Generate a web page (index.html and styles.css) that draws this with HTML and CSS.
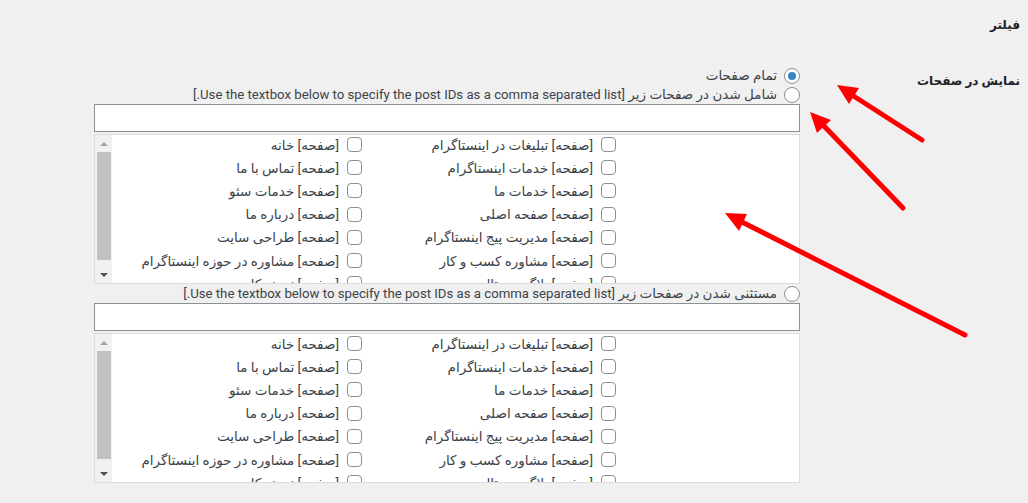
FILE: index.html
```html
<!DOCTYPE html>
<html lang="fa" dir="rtl">
<head>
<meta charset="utf-8">
<title>فیلتر</title>
<link rel="stylesheet" href="styles.css">
</head>
<body>
<div class="page">
  <h2 class="title">فیلتر</h2>
  <div class="row">
    <div class="label">نمایش در صفحات</div>
    <div class="field">
      <label class="opt"><span class="radio checked"></span><span>تمام صفحات</span></label>
      <label class="opt"><span class="radio"></span><span>شامل شدن در صفحات زیر <span class="en">[Use the textbox below to specify the post IDs as a comma separated list.]</span></span></label>
      <div class="textbox"></div>
      <div class="listbox">
        <div class="items">
          <label class="item"><span class="cb"></span><span>[صفحه] تبلیغات در اینستاگرام</span></label>
          <label class="item"><span class="cb"></span><span>[صفحه] خانه</span></label>
          <label class="item"><span class="cb"></span><span>[صفحه] خدمات اینستاگرام</span></label>
          <label class="item"><span class="cb"></span><span>[صفحه] تماس با ما</span></label>
          <label class="item"><span class="cb"></span><span>[صفحه] خدمات ما</span></label>
          <label class="item"><span class="cb"></span><span>[صفحه] خدمات سئو</span></label>
          <label class="item"><span class="cb"></span><span>[صفحه] صفحه اصلی</span></label>
          <label class="item"><span class="cb"></span><span>[صفحه] درباره ما</span></label>
          <label class="item"><span class="cb"></span><span>[صفحه] مدیریت پیج اینستاگرام</span></label>
          <label class="item"><span class="cb"></span><span>[صفحه] طراحی سایت</span></label>
          <label class="item"><span class="cb"></span><span>[صفحه] مشاوره کسب و کار</span></label>
          <label class="item"><span class="cb"></span><span>[صفحه] مشاوره در حوزه اینستاگرام</span></label>
          <label class="item"><span class="cb"></span><span>[صفحه] بلاگ دیجیتال</span></label>
          <label class="item"><span class="cb"></span><span>[صفحه] نمونه کار</span></label>
        </div>
        <div class="sbar"><span class="sb-up"></span><span class="sb-thumb"></span><span class="sb-down"></span></div>
      </div>
      <label class="opt"><span class="radio"></span><span>مستثنی شدن در صفحات زیر <span class="en">[Use the textbox below to specify the post IDs as a comma separated list.]</span></span></label>
      <div class="textbox"></div>
      <div class="listbox">
        <div class="items">
          <label class="item"><span class="cb"></span><span>[صفحه] تبلیغات در اینستاگرام</span></label>
          <label class="item"><span class="cb"></span><span>[صفحه] خانه</span></label>
          <label class="item"><span class="cb"></span><span>[صفحه] خدمات اینستاگرام</span></label>
          <label class="item"><span class="cb"></span><span>[صفحه] تماس با ما</span></label>
          <label class="item"><span class="cb"></span><span>[صفحه] خدمات ما</span></label>
          <label class="item"><span class="cb"></span><span>[صفحه] خدمات سئو</span></label>
          <label class="item"><span class="cb"></span><span>[صفحه] صفحه اصلی</span></label>
          <label class="item"><span class="cb"></span><span>[صفحه] درباره ما</span></label>
          <label class="item"><span class="cb"></span><span>[صفحه] مدیریت پیج اینستاگرام</span></label>
          <label class="item"><span class="cb"></span><span>[صفحه] طراحی سایت</span></label>
          <label class="item"><span class="cb"></span><span>[صفحه] مشاوره کسب و کار</span></label>
          <label class="item"><span class="cb"></span><span>[صفحه] مشاوره در حوزه اینستاگرام</span></label>
          <label class="item"><span class="cb"></span><span>[صفحه] بلاگ دیجیتال</span></label>
          <label class="item"><span class="cb"></span><span>[صفحه] نمونه کار</span></label>
        </div>
        <div class="sbar"><span class="sb-up"></span><span class="sb-thumb"></span><span class="sb-down"></span></div>
      </div>
    </div>
  </div>
</div>
<svg class="arrows" width="1028" height="503" viewBox="0 0 1028 503" aria-hidden="true">
  <g stroke="#ff0000" stroke-width="5" stroke-linecap="round" fill="none">
    <line x1="922" y1="140" x2="852" y2="95"/>
    <line x1="903" y1="208" x2="823" y2="125"/>
    <line x1="965" y1="335" x2="742" y2="222"/>
  </g>
  <g fill="#ff0000">
    <polygon points="837,85 859,88 849,104"/>
    <polygon points="810,112 831,120 817,133"/>
    <polygon points="725,213 747,214 739,231"/>
  </g>
</svg>
</body>
</html>
```

FILE: styles.css
```css
* { box-sizing: border-box; }

html, body {
  margin: 0;
  padding: 0;
  background: #f0f0f0;
}

body {
  font-family: Roboto, "DejaVu Sans", sans-serif;
  font-size: 13.5px;
  color: #2c3338;
  width: 1028px;
  height: 503px;
  overflow: hidden;
  position: relative;
}

.page {
  direction: rtl;
  padding-right: 8px;
}

.title {
  margin: 0;
  padding-top: 15px;
  height: 66px;
  font-size: 12px;
  line-height: 20px;
  font-weight: bold;
  color: #1d2327;
}

.row {
  display: flex;
}

.label {
  width: 220px;
  padding-top: 5px;
  font-weight: bold;
  font-size: 12px;
  line-height: 20px;
  color: #1d2327;
}

.field {
  width: 706px;
  display: flex;
  flex-direction: column;
}

.opt {
  display: flex;
  align-items: center;
  gap: 7px;
  height: 19px;
  line-height: 19px;
  white-space: nowrap;
  color: #3c434a;
}

.en {
  font-size: 13.2px;
}

.radio {
  width: 16px;
  height: 16px;
  border: 1px solid #8c8f94;
  border-radius: 50%;
  background: #fff;
  flex: none;
  display: flex;
  align-items: center;
  justify-content: center;
}

.radio.checked::after {
  content: "";
  width: 8px;
  height: 8px;
  border-radius: 50%;
  background: #3582c4;
}

.textbox {
  height: 28px;
  border: 1px solid #8c8f94;
  background: #fff;
  margin-bottom: 2px;
}

.listbox {
  height: 150px;
  border: 1px solid #dcdcde;
  background: #fff;
  display: flex;
  overflow: hidden;
}

.items {
  flex: 1;
  display: grid;
  grid-template-columns: 254px 254px;
  grid-auto-rows: 23.2px;
  margin-top: -2px;
  padding-right: 183px;
  align-content: start;
  overflow: hidden;
}

.item {
  display: flex;
  align-items: center;
  gap: 8px;
  white-space: nowrap;
  color: #3c434a;
}

.cb {
  width: 15px;
  height: 15px;
  border: 1px solid #8c8f94;
  border-radius: 4px;
  background: #fff;
  flex: none;
}

.sbar {
  width: 17px;
  flex: none;
  background: #f1f1f1;
  display: flex;
  flex-direction: column;
  align-items: center;
}

.sb-up, .sb-down {
  height: 17px;
  width: 17px;
  display: flex;
  align-items: center;
  justify-content: center;
}

.sb-up::after {
  content: "";
  border-left: 4px solid transparent;
  border-right: 4px solid transparent;
  border-bottom: 4px solid #a3a3a3;
}

.sb-down::after {
  content: "";
  border-left: 4px solid transparent;
  border-right: 4px solid transparent;
  border-top: 4px solid #505050;
}

.sb-thumb {
  width: 14px;
  height: 108px;
  background: #c1c1c1;
}

.sb-down {
  margin-top: auto;
}

.arrows {
  position: absolute;
  top: 0;
  left: 0;
  pointer-events: none;
}
```
